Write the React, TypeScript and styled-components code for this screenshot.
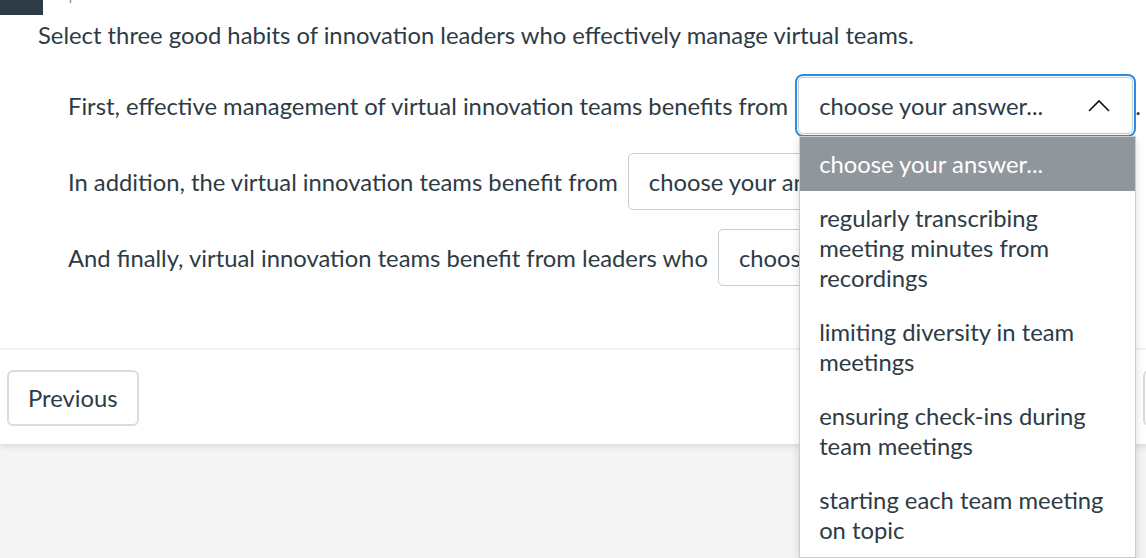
import React from "react";
import styled, { createGlobalStyle } from "styled-components";

const GlobalStyle = createGlobalStyle`
	html, body {
		margin: 0;
		padding: 0;
		overflow: hidden;
		background: #f4f4f4;
	}
	body {
		font-family: Lato, "Open Sans", "Liberation Sans", sans-serif;
		color: #2d3b45;
	}
`;

const Page = styled.div`
	width: 1260px;
	min-height: 558px;
	background: #f4f4f4;
`;

const Card = styled.div`
	background: #ffffff;
	box-shadow: 0 2px 7px rgba(0, 0, 0, 0.12);
`;

const Header = styled.div`
	display: flex;
	align-items: flex-end;
	gap: 12px;
	height: 15px;
	overflow: hidden;
`;

const Badge = styled.div`
	width: 43px;
	height: 50px;
	flex: 0 0 auto;
	background: #2d3b45;
	color: #ffffff;
	font-size: 23.8px;
	line-height: 30px;
	padding: 0 0 14px 10px;
	box-sizing: border-box;
	display: flex;
	align-items: flex-end;
`;

const Points = styled.div`
	color: #8b969e;
	font-size: 16px;
	line-height: 18px;
	margin-bottom: 12px;
`;

const Title = styled.div`
	font-size: 23.8px;
	line-height: 30px;
	padding: 5px 0 0 38px;
`;

const Rows = styled.div`
	display: flex;
	flex-direction: column;
	gap: 19px;
	padding: 27px 0 0 68px;
`;

const Row = styled.div`
	display: flex;
	align-items: center;
	height: 57px;
	font-size: 23.8px;
	line-height: 30px;
	white-space: nowrap;
`;

const SelectWrap = styled.div`
	position: relative;
	margin-left: 10px;
`;

const SelectBox = styled.div<{ $focused?: boolean }>`
	display: flex;
	align-items: center;
	justify-content: space-between;
	width: 335px;
	height: 57px;
	box-sizing: border-box;
	padding: 0 22px 0 20px;
	border: 1px solid #c7cdd1;
	border-radius: 5px;
	background: #ffffff;
	outline: ${p => (p.$focused ? "2px solid #2b8ce6" : "none")};
	outline-offset: 1px;
`;

const Chevron = styled.svg`
	width: 22px;
	height: 13px;
	flex: 0 0 auto;
`;

const Period = styled.span`
	margin-left: 2px;
`;

const Menu = styled.ul`
	position: absolute;
	top: calc(100% + 2px);
	left: 1px;
	width: 337px;
	margin: 0;
	padding: 0;
	list-style: none;
	background: #ffffff;
	border: 1px solid #c7cdd1;
	box-sizing: border-box;
	box-shadow: 0 3px 8px rgba(0, 0, 0, 0.15);
	z-index: 10;
	white-space: normal;
`;

const Option = styled.li<{ $active?: boolean }>`
	padding: 12px 19px;
	font-size: 23.8px;
	line-height: 30px;
	background: ${p => (p.$active ? "#8f969c" : "#ffffff")};
	color: ${p => (p.$active ? "#ffffff" : "#2d3b45")};
`;

const Divider = styled.div`
	height: 2px;
	background: #f2f2f2;
	margin-top: 62px;
`;

const Footer = styled.div`
	display: flex;
	justify-content: space-between;
	align-items: center;
	padding: 20px 7px 18px 7px;
`;

const NavButton = styled.button`
	height: 56px;
	padding: 0 19px;
	min-width: 110px;
	border: 2px solid #d9dcde;
	border-radius: 6px;
	background: #ffffff;
	color: #2d3b45;
	font-family: inherit;
	font-size: 23.8px;
`;

const options = [
	"choose your answer...",
	"regularly transcribing meeting minutes from recordings",
	"limiting diversity in team meetings",
	"ensuring check-ins during team meetings",
	"starting each team meeting on topic",
];

function Select({ open }: { open?: boolean }) {
	return (
		<SelectWrap>
			<SelectBox $focused={open}>
				<span>choose your answer...</span>
				<Chevron viewBox="0 0 22 13">
					{open
						? <polyline points="1,12 11,2 21,12" fill="none" stroke="#111" strokeWidth="1.6" />
						: <polyline points="1,1 11,11 21,1" fill="none" stroke="#111" strokeWidth="1.6" />}
				</Chevron>
			</SelectBox>
			{open
				? (
					<Menu>
						{options.map((o, i) => <Option key={o} $active={i === 0}>{o}</Option>)}
					</Menu>
				)
				: null}
		</SelectWrap>
	);
}

export default function App() {
	return (
		<Page>
			<GlobalStyle />
			<Card>
				<Header>
					<Badge>10</Badge>
					<Points>1 pts</Points>
				</Header>
				<Title>Select three good habits of innovation leaders who effectively manage virtual teams.</Title>
				<Rows>
					<Row>
						First, effective management of virtual innovation teams benefits from
						<Select open />
						<Period>.</Period>
					</Row>
					<Row>
						In addition, the virtual innovation teams benefit from
						<Select />
						<Period>.</Period>
					</Row>
					<Row>
						And finally, virtual innovation teams benefit from leaders who
						<Select />
						<Period>.</Period>
					</Row>
				</Rows>
				<Divider />
				<Footer>
					<NavButton>Previous</NavButton>
					<NavButton>Next</NavButton>
				</Footer>
			</Card>
		</Page>
	);
}
